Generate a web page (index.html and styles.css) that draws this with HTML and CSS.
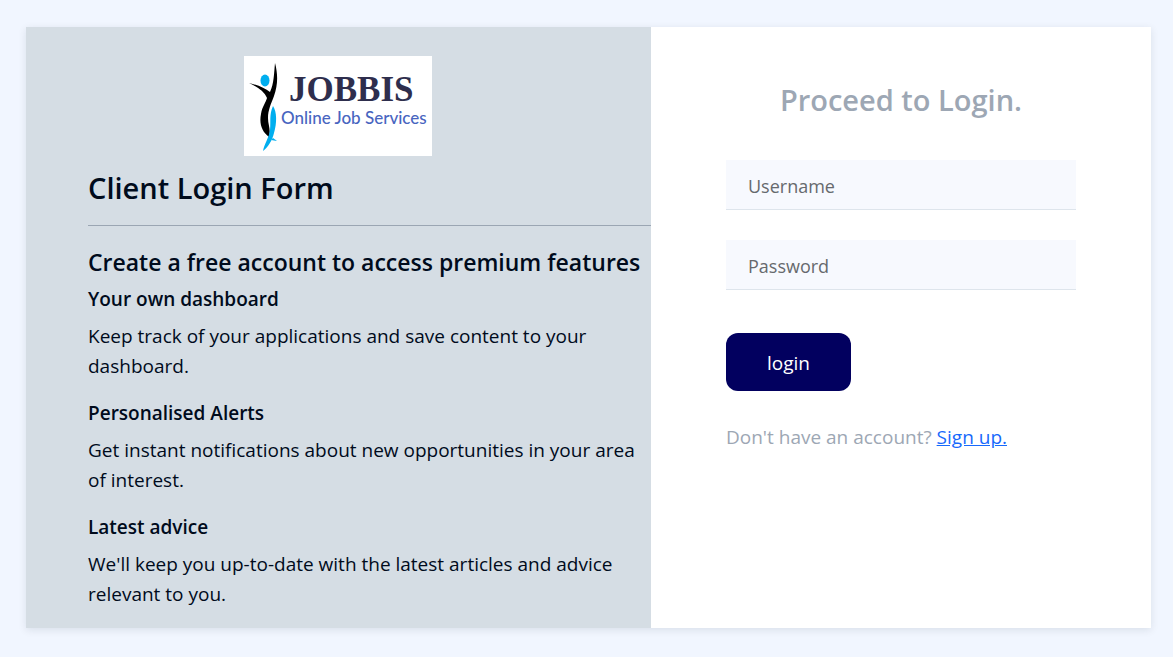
FILE: index.html
```html
<!DOCTYPE html>
<html lang="en">
<head>
<meta charset="utf-8">
<meta name="viewport" content="width=device-width, initial-scale=1">
<title>Client Login</title>
<link rel="stylesheet" href="styles.css">
</head>
<body>
<main class="card">
  <section class="intro">
    <svg class="logo" viewBox="0 0 188 100" role="img" aria-label="JOBBIS Online Job Services">
      <rect width="188" height="100" fill="#fff"/>
      <path d="M31 7C34 18 34 29 30 40C27 48 24 54 24 62C24 69 27 73 25 81C18 76 15 68 17 58C18 51 22 46 23 42C20 35 13 31 5 27C14 29 21 32 26 36C30 28 30 17 31 7Z" fill="#000"/>
      <path d="M29 50C33 56 33 67 30 77C28 85 24 91 19 95C20 88 25 82 26 74C27 65 25 59 29 50Z" fill="#00aeef"/>
      <path d="M29 82L33 85L27 84Z" fill="#00aeef"/>
      <ellipse cx="21" cy="24.500" rx="4.500" ry="6" fill="#00aeef"/>
      <text class="logo-name" x="45" y="45" font-size="35">JOBBIS</text>
      <text class="logo-tagline" x="37" y="68" font-size="17">Online Job Services</text>
    </svg>
    <h1 class="intro-title">Client Login Form</h1>
    <hr class="rule">
    <h2 class="intro-lead">Create a free account to access premium features</h2>
    <h3 class="feature-title">Your own dashboard</h3>
    <p class="feature-text">Keep track of your applications and save content to your dashboard.</p>
    <h3 class="feature-title">Personalised Alerts</h3>
    <p class="feature-text">Get instant notifications about new opportunities in your area of interest.</p>
    <h3 class="feature-title">Latest advice</h3>
    <p class="feature-text">We'll keep you up-to-date with the latest articles and advice relevant to you.</p>
  </section>
  <section class="login">
    <h2 class="login-title">Proceed to Login.</h2>
    <form class="login-form">
      <input class="field" type="text" placeholder="Username" aria-label="Username">
      <input class="field" type="password" placeholder="Password" aria-label="Password">
      <button class="submit" type="submit">login</button>
    </form>
    <p class="signup">Don't have an account? <a class="signup-link" href="#">Sign up.</a></p>
  </section>
</main>
</body>
</html>
```
FILE: styles.css
```css
* { box-sizing: border-box; }

body {
  margin: 0;
  padding: 27px 22px 29px 26px;
  background: #f1f6ff;
  color: #000b1c;
  font-family: "Segoe UI", "Open Sans", sans-serif;
  font-size: 19px;
  line-height: 30px;
}

h1, h2, h3, p { margin: 0; }

.card {
  display: grid;
  grid-template-columns: 5fr 4fr;
  background: #fff;
  box-shadow: 0 2px 8px rgba(0, 30, 40, 0.1);
}

.intro {
  min-width: 0;
  padding: 29px 0 19px 62px;
  background: #d5dde4;
}

.logo {
  display: block;
  width: 188px;
  height: 100px;
  margin: 0 auto 14px 156px;
}

.logo-name {
  font-family: "Liberation Serif", serif;
  font-weight: 700;
  fill: #2e2e4d;
}

.logo-tagline {
  font-family: Lato, sans-serif;
  font-weight: 500;
  fill: #4865bf;
}

.intro-title {
  font-size: 29px;
  font-weight: 600;
  line-height: 36px;
}

.rule {
  margin: 19px 0 21px;
  border: 0;
  border-top: 1px solid #9ba6b3;
}

.intro-lead {
  margin-bottom: 10px;
  font-size: 23px;
  font-weight: 600;
  line-height: 30px;
  white-space: nowrap;
}

.feature-title {
  margin-bottom: 10px;
  font-size: 19px;
  font-weight: 600;
  line-height: 24px;
}

.feature-text + .feature-title { margin-top: 20px; }

.login { padding: 55px 15% 32px; }

.login-title {
  margin-bottom: 42px;
  color: #9da7b4;
  font-size: 29px;
  font-weight: 600;
  line-height: 36px;
  text-align: center;
}

.login-form {
  display: flex;
  flex-direction: column;
  align-items: flex-start;
}

.field {
  width: 100%;
  height: 50px;
  margin-bottom: 30px;
  padding: 2px 22px 0;
  border: 0;
  border-bottom: 1px solid #dee5ec;
  border-radius: 0;
  background: #f7f9fe;
  color: #212529;
  font: inherit;
  font-size: 18px;
}

.field::placeholder { color: #66696d; opacity: 1; }

.submit {
  height: 58px;
  margin-top: 13px;
  padding: 1px 41px 0;
  border: 0;
  border-radius: 12px;
  background: #02005f;
  color: #fff;
  font: inherit;
}

.signup {
  margin-top: 31px;
  color: #9da7b4;
}

.signup-link { color: #1769fc; }
```
